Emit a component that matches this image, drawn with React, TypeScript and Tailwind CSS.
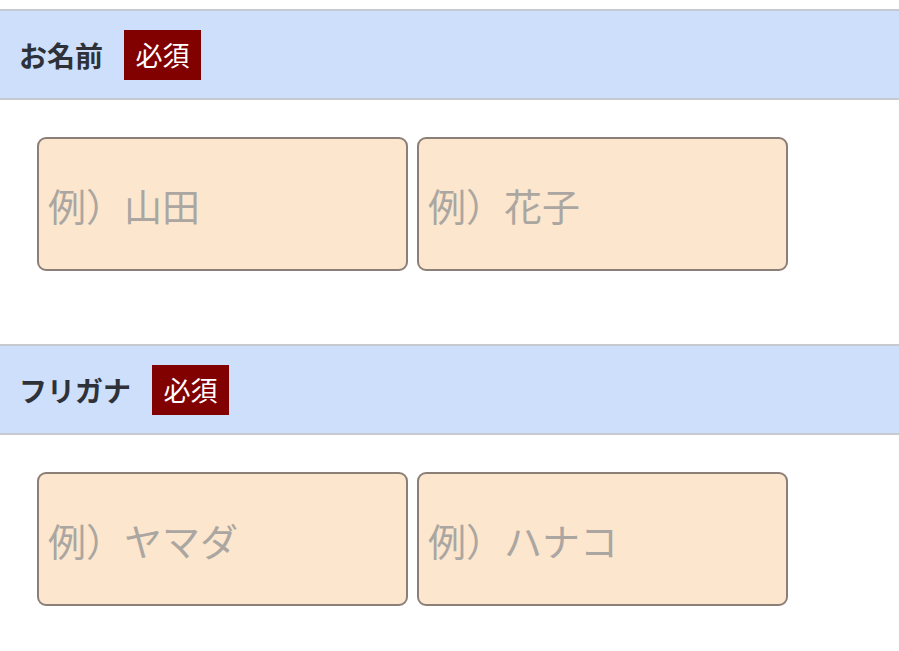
import React from 'react';

interface Field {
  label: string;
  placeholders: [string, string];
}

const fields: Field[] = [
  { label: 'お名前', placeholders: ['例）山田', '例）花子'] },
  { label: 'フリガナ', placeholders: ['例）ヤマダ', '例）ハナコ'] },
];

const font = '[font-family:"Noto_Sans_CJK_JP","Noto_Sans",sans-serif]';

const FieldSection: React.FC<{ field: Field }> = ({ field }) => (
  <section className="pb-[73px]">
    {/* 見出し */}
    <div className="flex h-[91px] items-center border-y-2 border-[#c6c9cf] bg-[#cddffb] pl-[19px]">
      <span className="text-[28px] font-bold leading-none text-[#2e3238]">{field.label}</span>
      <span className="ml-[21px] flex h-[50px] w-[77px] items-center justify-center bg-[#810000] text-[27px] leading-none text-white">
        必須
      </span>
    </div>

    {/* 入力欄 */}
    <div className="flex gap-[9px] pl-[37px] pt-[37px]">
      {field.placeholders.map((ph) => (
        <input
          key={ph}
          type="text"
          placeholder={ph}
          className="h-[134px] w-[371px] rounded-[9px] border-2 border-[#8c7f78] bg-[#fce6cd] px-[9px] text-[38px] text-[#333] outline-none placeholder:text-[#aba6a1]"
        />
      ))}
    </div>
  </section>
);

export default function App() {
  return (
    <div className={`min-h-[651px] w-full overflow-hidden bg-white pt-[9px] ${font}`}>
      {fields.map((f) => (
        <FieldSection key={f.label} field={f} />
      ))}
    </div>
  );
}
